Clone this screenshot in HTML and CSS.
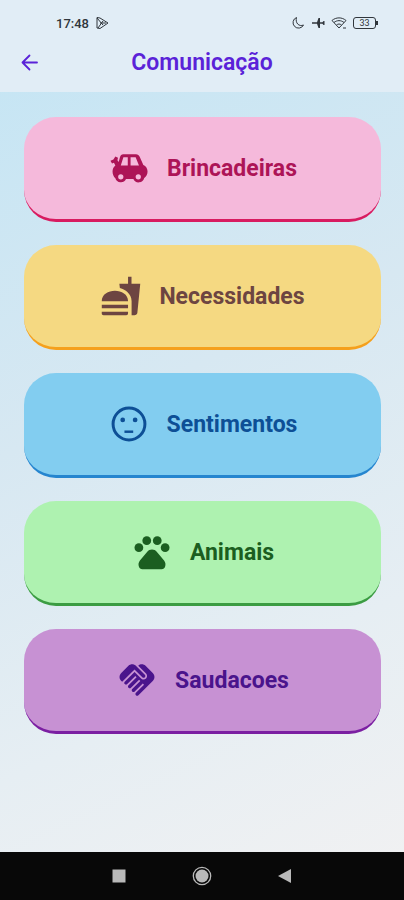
FILE: index.html
```html
<!DOCTYPE html>
<html lang="pt-BR">
<head>
    <meta charset="UTF-8">
    <meta name="viewport" content="width=device-width, initial-scale=1.0">
    <title>Comunicação</title>
    <link rel="stylesheet" href="styles.css">
</head>
<body>
    <header class="app-header">
        <div class="status-bar">
            <div class="status-group">
                <span class="clock">17:48</span>
                <svg class="status-icon" viewBox="0 0 14 14" fill="none" stroke="currentColor">
                    <path d="M2 1.500v10.500l3 .500 8-5.500-8-5z"/>
                    <path d="M2 2l6 7M3 12l5-7M5 7h6"/>
                </svg>
            </div>
            <div class="status-group">
                <svg class="status-icon" viewBox="0 0 14 14" fill="none" stroke="currentColor">
                    <path d="M5.500 1.500A5.500 5.500 0 1 0 12.500 9C8 11 4 7 5.500 1.500z"/>
                </svg>
                <svg class="status-icon" viewBox="0 0 14 14" fill="currentColor">
                    <path d="M1 6.300h5L7.500 2H9v4.300h2.500L12.500 5h1v4h-1l-1-1.300H9V12H7.500L6 7.700H1z"/>
                </svg>
                <svg class="status-icon wifi" viewBox="0 0 16 14" fill="none" stroke="currentColor">
                    <path d="M1 4.500C5 1 11 1 15 4.500L8 12z"/>
                    <path d="M3 6.500c3-2.500 7-2.500 10 0M5.500 9c1.500-1.300 3.500-1.300 5 0"/>
                    <path d="M12 12h3"/>
                </svg>
                <span class="battery">33</span>
            </div>
        </div>
        <div class="title-bar">
            <button class="back-btn" type="button" aria-label="Voltar">
                <svg viewBox="0 0 18 18" fill="none" stroke="currentColor" stroke-width="1.800" stroke-linecap="round" stroke-linejoin="round">
                    <path d="M16 9.500H1.500M8.500 2.500l-7 7 7 7"/>
                </svg>
            </button>
            <h1>Comunicação</h1>
        </div>
    </header>

    <main class="categories">
        <button class="category-btn brincadeiras" type="button">
            <svg class="category-icon" viewBox="0 0 24 24" fill="currentColor">
                <path fill-rule="evenodd" d="M8.700 4.200h7.300c1 0 1.700.5 2.100 1.400l2.100 4.700c1.500.7 2.400 2 2.400 3.700 0 1.600-.7 3-1.900 3.700a3.300 3.300 0 0 1-6.200.6h-4.200a3.300 3.300 0 0 1-6.100-.5c-1-.8-1.600-2.200-1.600-3.800 0-1.500.6-2.700 1.600-3.500L3.400 9l-1.100.4-.9-1.600 1.700-.7 1.100-1.700 1.500.8-.3 1.300.7 1 .7-2.500c.3-1.100 1-1.800 1.900-1.800zM8.800 5.900l-1.500 4.700h4V5.900zM12.900 5.900v4.700h4.800L15.800 5.900zM7.300 15.500a1.500 1.500 0 1 0 0 3 1.500 1.500 0 0 0 0-3zM17.300 15.500a1.500 1.500 0 1 0 0 3 1.500 1.500 0 0 0 0-3z"/>
            </svg>
            <span>Brincadeiras</span>
        </button>

        <button class="category-btn necessidades" type="button">
            <svg class="category-icon" viewBox="0 0 24 24" fill="currentColor">
                <path d="M18.060 22.990h1.660c.84 0 1.530-.64 1.630-1.460L23 5.050h-5V1h-1.970v4.050h-4.970l.3 2.340c1.710.47 3.310 1.320 4.270 2.260 1.440 1.420 2.430 2.890 2.430 5.290v8.050zM1 21.990V21h15.030v.99c0 .55-.45 1-1.010 1H2.010c-.56 0-1.010-.45-1.010-1zm15.030-7c0-8-15.030-8-15.030 0h15.030zM1.020 17h15v2h-15z"/>
            </svg>
            <span>Necessidades</span>
        </button>

        <button class="category-btn sentimentos" type="button">
            <svg class="category-icon" viewBox="0 0 24 24" fill="currentColor">
                <circle cx="12" cy="12" r="9.100" fill="none" stroke="currentColor" stroke-width="1.700"/>
                <circle cx="8.400" cy="9.700" r="1.350"/>
                <circle cx="15.500" cy="9.700" r="1.350"/>
                <path d="M9.400 15.700h5v1.400h-5z"/>
            </svg>
            <span>Sentimentos</span>
        </button>

        <button class="category-btn animais" type="button">
            <svg class="category-icon" viewBox="0 0 24 24" fill="currentColor">
                <circle cx="4.500" cy="9.500" r="2.500"/>
                <circle cx="9" cy="5.500" r="2.500"/>
                <circle cx="15" cy="5.500" r="2.500"/>
                <circle cx="19.500" cy="9.500" r="2.500"/>
                <path d="M12 10.500c-1.200 0-2 .5-2.700 1.300l-4.200 5c-.8 1-1 2.200-.6 3.500.3 1 1 1.500 2 1.500h11c1 0 1.700-.5 2-1.500.4-1.300.2-2.500-.6-3.500l-4.200-5c-.7-.8-1.500-1.300-2.700-1.300z"/>
            </svg>
            <span>Animais</span>
        </button>

        <button class="category-btn saudacoes" type="button">
            <svg class="category-icon" viewBox="0 0 24 24" fill="currentColor">
                <path d="M16.480 10.410c-.39.39-1.040.39-1.430 0l-4.470-4.460-7.050 7.040-.66-.63c-1.170-1.170-1.170-3.070 0-4.240l4.240-4.240c1.170-1.170 3.070-1.170 4.240 0L16.480 9c.39.39.39 1.020 0 1.410zm.7-2.120c.78.78.78 2.050 0 2.830-1.270 1.270-2.610.22-2.830 0l-3.760-3.760-5.570 5.570c-.39.39-.39 1.020 0 1.410s1.020.39 1.420 0l4.620-4.620.71.71-4.620 4.620c-.39.39-.39 1.020 0 1.410s1.020.39 1.420 0l4.620-4.620.71.71-4.620 4.620c-.39.39-.39 1.020 0 1.410s1.020.39 1.410 0l4.620-4.620.71.71-4.620 4.620c-.39.39-.39 1.020 0 1.410s1.020.39 1.410 0l8.320-8.340c1.170-1.170 1.170-3.070 0-4.240l-4.240-4.240c-1.150-1.150-3.010-1.170-4.180-.06l4.470 4.470z"/>
            </svg>
            <span>Saudacoes</span>
        </button>
    </main>

    <nav class="system-nav">
        <button type="button" aria-label="Recentes">
            <svg viewBox="0 0 20 20" fill="currentColor"><path d="M3.500 3.500h13v13h-13z"/></svg>
        </button>
        <button type="button" aria-label="Início">
            <svg viewBox="0 0 20 20" fill="currentColor">
                <circle cx="10" cy="10" r="8.700" fill="none" stroke="currentColor" stroke-width="1.300"/>
                <circle cx="10" cy="10" r="6.500"/>
            </svg>
        </button>
        <button type="button" aria-label="Voltar">
            <svg viewBox="0 0 20 20" fill="currentColor"><path d="M16 3v14L3 10z"/></svg>
        </button>
    </nav>
</body>
</html>
```
FILE: styles.css
```css
* {
    margin: 0;
    padding: 0;
    box-sizing: border-box;
}

body {
    font-family: Roboto, 'Liberation Sans', sans-serif;
    background: linear-gradient(155deg, #c5e5f4 5%, #d7e8f2 42%, #e6eef3 72%, #f1f1f2 98%);
    min-height: 100vh;
    display: flex;
    flex-direction: column;
}

button {
    border: none;
    background: none;
    font-family: inherit;
    cursor: pointer;
}

svg {
    display: block;
}

/* Header */
.app-header {
    background: #e1edf6;
    height: 92px;
    padding-top: 14px;
}

.status-bar {
    display: flex;
    justify-content: space-between;
    align-items: center;
    height: 18px;
    padding: 0 28px 0 56px;
    color: #30363c;
}

.status-group {
    display: flex;
    align-items: center;
    gap: 6px;
}

.clock {
    font-size: 13px;
    font-weight: 500;
}

.status-icon {
    width: 14px;
    height: 14px;
}

.wifi {
    width: 16px;
}

.battery {
    position: relative;
    width: 23px;
    height: 12px;
    border: 1px solid #30363c;
    border-radius: 3px;
    font-size: 9px;
    line-height: 10px;
    text-align: center;
}

.battery::after {
    content: '';
    position: absolute;
    top: 3px;
    right: -3px;
    width: 2px;
    height: 4px;
    background: #30363c;
}

.title-bar {
    display: grid;
    grid-template-columns: 18px 1fr 18px;
    align-items: center;
    height: 60px;
    padding: 0 21px;
    color: #5a22d8;
}

.back-btn {
    color: inherit;
}

.title-bar h1 {
    font-size: 23px;
    font-weight: 600;
    text-align: center;
}

/* Category buttons */
.categories {
    flex: 1;
    display: flex;
    flex-direction: column;
    gap: 23px;
    padding: 25px 23px 25px 24px;
}

.category-btn {
    display: flex;
    justify-content: center;
    align-items: center;
    gap: 17px;
    height: 105px;
    border-bottom: 3px solid;
    border-radius: 32px;
    font-size: 23px;
    font-weight: 700;
}

.category-icon {
    width: 42px;
    height: 42px;
}

.brincadeiras {
    background: #f5b9db;
    border-color: #d81b60;
    color: #ad1457;
}

.necessidades {
    background: #f5d982;
    border-color: #f5a01c;
    color: #6d4541;
}

.sentimentos {
    background: #82cdf0;
    border-color: #2585cf;
    color: #0d4f96;
}

.animais {
    background: #aef2b0;
    border-color: #3b9c42;
    color: #1b5e20;
}

.saudacoes {
    background: #c791d3;
    border-color: #7b1fa2;
    color: #4a148c;
}

/* Android navigation bar */
.system-nav {
    display: flex;
    justify-content: center;
    align-items: center;
    gap: 63px;
    height: 48px;
    background: #080808;
}

.system-nav button {
    color: #b9b9b9;
}

.system-nav svg {
    width: 20px;
    height: 20px;
}
```
